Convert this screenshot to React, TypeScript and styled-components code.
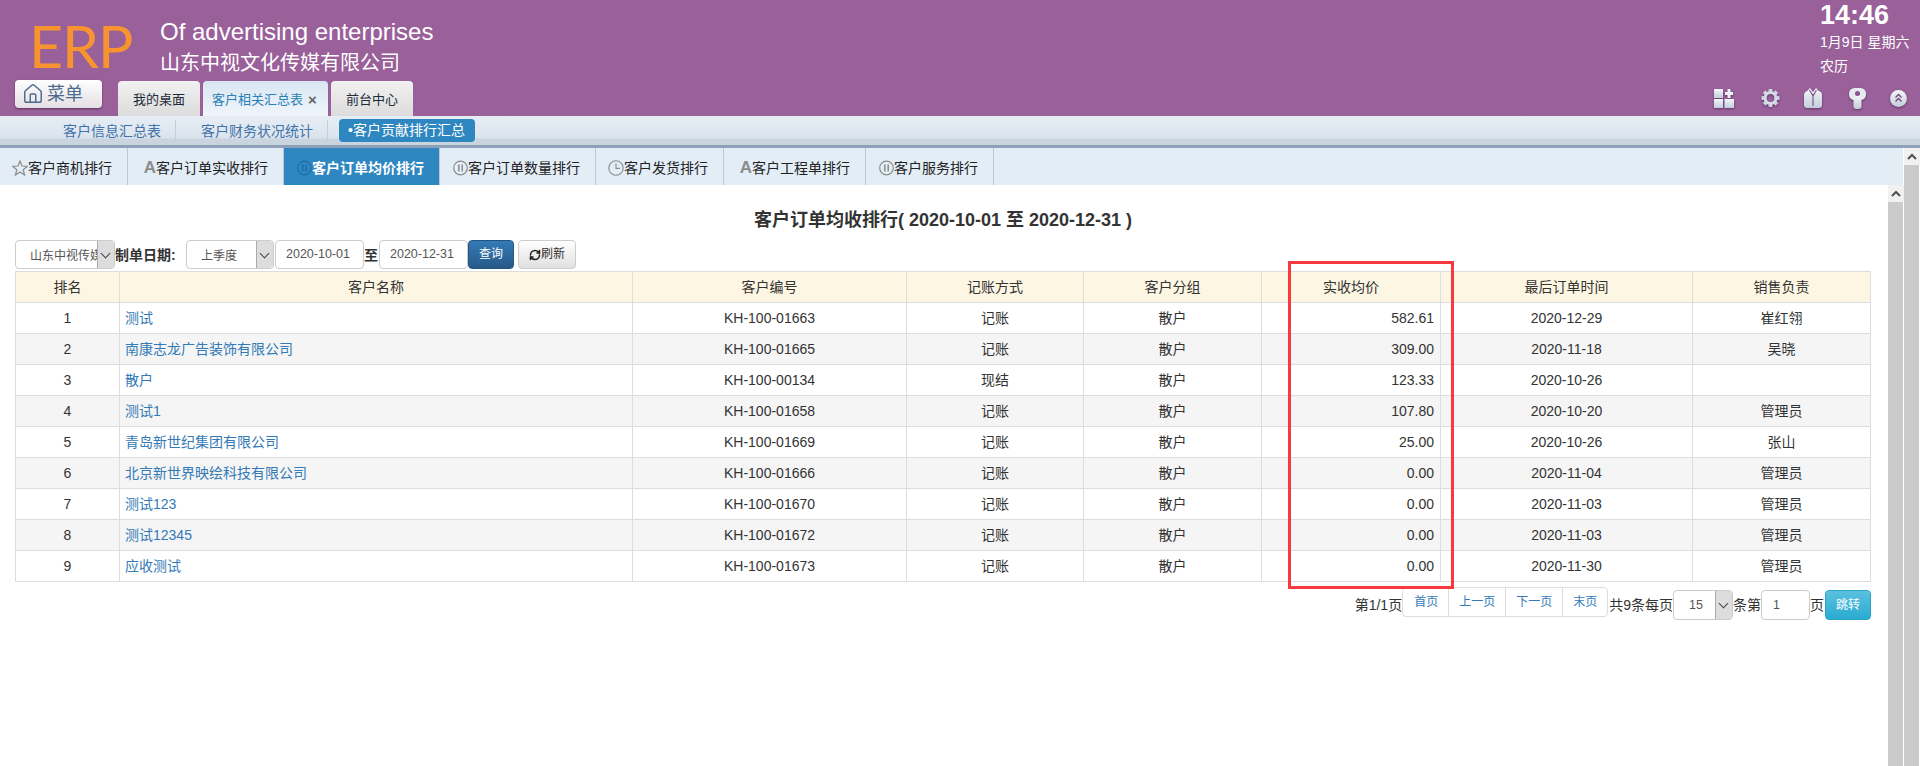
import React from "react";
import styled, { createGlobalStyle } from "styled-components";
import { House, RefreshCw } from "lucide-react";

const FONT = `"Liberation Sans", "Noto Sans CJK SC", sans-serif`;

const GlobalStyle = createGlobalStyle`
  html, body {
    margin: 0;
    padding: 0;
    background: #fff;
  }
  body {
    font-family: ${FONT};
    font-size: 14px;
    color: #333;
  }
  * {
    box-sizing: border-box;
  }
`;

const rows = [
  ["1", "测试", "KH-100-01663", "记账", "散户", "582.61", "2020-12-29", "崔红翎"],
  ["2", "南康志龙广告装饰有限公司", "KH-100-01665", "记账", "散户", "309.00", "2020-11-18", "吴晓"],
  ["3", "散户", "KH-100-00134", "现结", "散户", "123.33", "2020-10-26", ""],
  ["4", "测试1", "KH-100-01658", "记账", "散户", "107.80", "2020-10-20", "管理员"],
  ["5", "青岛新世纪集团有限公司", "KH-100-01669", "记账", "散户", "25.00", "2020-10-26", "张山"],
  ["6", "北京新世界映绘科技有限公司", "KH-100-01666", "记账", "散户", "0.00", "2020-11-04", "管理员"],
  ["7", "测试123", "KH-100-01670", "记账", "散户", "0.00", "2020-11-03", "管理员"],
  ["8", "测试12345", "KH-100-01672", "记账", "散户", "0.00", "2020-11-03", "管理员"],
  ["9", "应收测试", "KH-100-01673", "记账", "散户", "0.00", "2020-11-30", "管理员"],
];

const columns = [
  { title: "排名", width: 104 },
  { title: "客户名称", width: 513 },
  { title: "客户编号", width: 274 },
  { title: "记账方式", width: 177 },
  { title: "客户分组", width: 178 },
  { title: "实收均价", width: 179 },
  { title: "最后订单时间", width: 252 },
  { title: "销售负责", width: 178 },
];

type TabKind = "star" | "letter" | "pause" | "clock";

const rankTabs: { label: string; kind: TabKind; active?: boolean }[] = [
  { label: "客户商机排行", kind: "star" },
  { label: "客户订单实收排行", kind: "letter" },
  { label: "客户订单均价排行", kind: "pause", active: true },
  { label: "客户订单数量排行", kind: "pause" },
  { label: "客户发货排行", kind: "clock" },
  { label: "客户工程单排行", kind: "letter" },
  { label: "客户服务排行", kind: "pause" },
];

const App = () => {
  return (
    <Frame>
      <GlobalStyle />
      <Header>
        <TopRow>
          <Brand>
            <Logo>ERP</Logo>
            <BrandText>
              <Slogan>Of advertising enterprises</Slogan>
              <Company>山东中视文化传媒有限公司</Company>
            </BrandText>
          </Brand>
          <Clock>
            <Time>14:46</Time>
            <ClockLine>1月9日 星期六</ClockLine>
            <ClockLine>农历</ClockLine>
          </Clock>
        </TopRow>
        <BottomRow>
          <MenuButton>
            <House size={22} strokeWidth={1.6} />
            菜单
          </MenuButton>
          <NavTabs>
            <NavTab>我的桌面</NavTab>
            <NavTab $active>
              客户相关汇总表
              <CloseMark>×</CloseMark>
            </NavTab>
            <NavTab>前台中心</NavTab>
          </NavTabs>
          <ToolIcons>
            <svg width="20" height="19" viewBox="0 0 20 19">
              <defs>
                <linearGradient id="toolFill" x1="0" y1="0" x2="0" y2="1">
                  <stop offset="0" stopColor="#f4f6fa" />
                  <stop offset="1" stopColor="#c3cddb" />
                </linearGradient>
              </defs>
              <rect x="0" y="0" width="9" height="9" fill="url(#toolFill)" />
              <rect x="0" y="10" width="9" height="9" fill="url(#toolFill)" />
              <rect x="10.5" y="10" width="9.5" height="9" fill="url(#toolFill)" />
              <rect x="13.5" y="0" width="3" height="9" fill="#eef1f6" />
              <rect x="11" y="3" width="8" height="3" fill="#eef1f6" />
            </svg>
            <ToolSlot $gap={27}>
              <svg width="19" height="18" viewBox="0 0 19 19">
                {[0, 45, 90, 135, 180, 225, 270, 315].map((deg) => (
                  <rect
                    key={deg}
                    x="7.5"
                    y="0"
                    width="4"
                    height="5"
                    fill="#ccd4df"
                    transform={`rotate(${deg} 9.5 9.5)`}
                  />
                ))}
                <circle cx="9.5" cy="9.5" r="5.7" fill="none" stroke="#d4dbe5" strokeWidth="3.2" />
              </svg>
            </ToolSlot>
            <ToolSlot $gap={24}>
              <svg width="18" height="20" viewBox="0 0 18 20">
                <path
                  d="M3 3 L6 0 L9 4 L12 0 L15 3 Q18 4 18 7 V17 Q18 20 15 20 H3 Q0 20 0 17 V7 Q0 4 3 3 Z"
                  fill="url(#toolFill)"
                />
                <path d="M5.5 2 L9 8 L12.5 2 M9 6 V18" fill="none" stroke="#7b4d82" strokeWidth="1.1" />
              </svg>
            </ToolSlot>
            <ToolSlot $gap={27}>
              <svg width="17" height="21" viewBox="0 0 17 21">
                <rect x="0" y="0" width="17" height="12" rx="5.5" fill="#e6eaf1" />
                <rect x="4.5" y="8" width="8" height="13" rx="3" fill="url(#toolFill)" />
                <circle cx="8.5" cy="5.5" r="2.5" fill="#8a5590" />
              </svg>
            </ToolSlot>
            <ToolSlot $gap={24}>
              <svg width="17" height="17" viewBox="0 0 17 17">
                <circle cx="8.5" cy="8.5" r="8.5" fill="url(#toolFill)" />
                <path d="M5.5 7.5 L8.5 4.5 L11.5 7.5 M5.5 11.5 L8.5 8.5 L11.5 11.5" fill="none" stroke="#6d4378" strokeWidth="1.3" />
              </svg>
            </ToolSlot>
          </ToolIcons>
        </BottomRow>
      </Header>

      <SubNav>
        <SubNavItem $first>客户信息汇总表</SubNavItem>
        <SubNavItem>客户财务状况统计</SubNavItem>
        <SubNavPill>•客户贡献排行汇总</SubNavPill>
      </SubNav>

      <Main>
        <Workspace>
          <TabBar>
            {rankTabs.map((tab) => (
              <RankTab key={tab.label} $active={tab.active}>
                <TabIconSlot>
                  <TabIcon kind={tab.kind} active={tab.active} />
                </TabIconSlot>
                {tab.label}
              </RankTab>
            ))}
          </TabBar>
          <WorkBody>
            <Page>
              <Title>客户订单均收排行( 2020-10-01 至 2020-12-31 )</Title>
              <Toolbar>
                <SelectBox $width={100}>
                  <SelectText>山东中视传媒</SelectText>
                  <SelectArrow />
                </SelectBox>
                <FieldLabel>制单日期:</FieldLabel>
                <SelectBox $width={88}>
                  <SelectText>上季度</SelectText>
                  <SelectArrow />
                </SelectBox>
                <DateBox>2020-10-01</DateBox>
                <RangeLabel>至</RangeLabel>
                <DateBox>2020-12-31</DateBox>
                <PrimaryButton>查询</PrimaryButton>
                <RefreshButton>
                  <RefreshCw size={12} strokeWidth={3.2} color="#222" />
                  刷新
                </RefreshButton>
              </Toolbar>

              <ReportTable>
                <thead>
                  <tr>
                    {columns.map((col) => (
                      <HeadCell key={col.title} $width={col.width}>
                        {col.title}
                      </HeadCell>
                    ))}
                  </tr>
                </thead>
                <tbody>
                  {rows.map((row) => (
                    <tr key={row[0]}>
                      {row.map((value, i) =>
                        i === 1 ? (
                          <NameCell key={i}>{value}</NameCell>
                        ) : i === 5 ? (
                          <AmountCell key={i}>{value}</AmountCell>
                        ) : (
                          <Cell key={i}>{value}</Cell>
                        )
                      )}
                    </tr>
                  ))}
                </tbody>
              </ReportTable>

              <Pager>
                <PagerText>第1/1页</PagerText>
                <PagerLinks>
                  <PagerLink>首页</PagerLink>
                  <PagerLink>上一页</PagerLink>
                  <PagerLink>下一页</PagerLink>
                  <PagerLink>末页</PagerLink>
                </PagerLinks>
                <PagerText>共9条每页</PagerText>
                <PageSizeBox>
                  <PageSizeText>15</PageSizeText>
                  <SelectArrow />
                </PageSizeBox>
                <PagerText>条第</PagerText>
                <PageInput>1</PageInput>
                <PagerText>页</PagerText>
                <JumpButton>跳转</JumpButton>
              </Pager>

              <Highlight />
            </Page>
            <ScrollTrack>
              <ScrollUp>
                <UpChevron />
              </ScrollUp>
              <ScrollThumb />
            </ScrollTrack>
          </WorkBody>
        </Workspace>
        <OuterScroll>
          <ScrollUp>
            <UpChevron />
          </ScrollUp>
          <ScrollThumb />
        </OuterScroll>
      </Main>
    </Frame>
  );
};

export default App;

const TabIcon = ({ kind, active }: { kind: TabKind; active?: boolean }) => {
  const tone = active ? "#1d6cab" : "#8b8b8b";
  if (kind === "letter") return <LetterIcon>A</LetterIcon>;
  if (kind === "star") {
    return (
      <svg width="16" height="16" viewBox="0 0 16 16">
        <path
          d="M8 1 L10 6 L15.4 6.3 L11.2 9.7 L12.6 15 L8 12 L3.4 15 L4.8 9.7 L.6 6.3 L6 6 Z"
          fill="none"
          stroke={tone}
          strokeWidth="1.2"
        />
      </svg>
    );
  }
  if (kind === "clock") {
    return (
      <svg width="16" height="16" viewBox="0 0 16 16">
        <circle cx="8" cy="8" r="7.2" fill="none" stroke={tone} strokeWidth="1.1" />
        <path d="M8 3.5 V8.4 H12" fill="none" stroke={tone} strokeWidth="1.1" />
      </svg>
    );
  }
  return (
    <svg width="15" height="16" viewBox="0 0 15 16">
      <circle cx="7.5" cy="8" r="6.8" fill="none" stroke={tone} strokeWidth="1.2" />
      <path d="M5.8 4.5 V11.5 M9.2 4.5 V11.5" fill="none" stroke={tone} strokeWidth="1.5" />
    </svg>
  );
};

const UpChevron = () => (
  <svg width="10" height="7" viewBox="0 0 10 7">
    <path d="M1 6 L5 2 L9 6" fill="none" stroke="#505050" strokeWidth="2" />
  </svg>
);

const Frame = styled.div`
  display: flex;
  flex-direction: column;
  width: 1920px;
  height: 766px;
  overflow: hidden;
`;

const Header = styled.header`
  display: flex;
  flex-direction: column;
  height: 116px;
  background: #99609a;
  flex: none;
`;

const TopRow = styled.div`
  display: flex;
  justify-content: space-between;
  height: 80px;
`;

const Brand = styled.div`
  display: flex;
  padding-left: 29px;
`;

const Logo = styled.div`
  width: 131px;
  font-family: "Lato", sans-serif;
  font-weight: 400;
  font-size: 59px;
  letter-spacing: -1px;
  line-height: 92px;
  color: #f79430;
`;

const BrandText = styled.div`
  display: flex;
  flex-direction: column;
  gap: 1px;
  padding-top: 17px;
  color: #fff;
`;

const Slogan = styled.div`
  font-size: 24px;
  line-height: 30px;
`;

const Company = styled.div`
  font-size: 20px;
  line-height: 30px;
`;

const Clock = styled.div`
  width: 100px;
  color: #fff;
`;

const Time = styled.div`
  font-size: 27px;
  font-weight: 700;
  line-height: 30px;
`;

const ClockLine = styled.div`
  font-size: 14px;
  line-height: 24px;
`;

const BottomRow = styled.div`
  display: flex;
  height: 36px;
  padding-left: 15px;
`;

const MenuButton = styled.div`
  display: flex;
  align-items: center;
  gap: 3px;
  width: 87px;
  height: 28px;
  padding-left: 7px;
  border-radius: 4px;
  background: linear-gradient(#fff, #e4dfe3);
  box-shadow: 0 1px 2px rgba(50, 20, 50, 0.6);
  color: #4b6c8e;
  font-size: 18px;
  line-height: 28px;
`;

const NavTabs = styled.div`
  display: flex;
  gap: 3px;
  margin: 1px 0 0 16px;
`;

const NavTab = styled.div<{ $active?: boolean }>`
  display: flex;
  align-items: center;
  gap: 5px;
  width: ${(p) => (p.$active ? 125 : 82)}px;
  height: 35px;
  padding: ${(p) => (p.$active ? "2px 0 0 9px" : "2px 0 0 15px")};
  border-radius: 4px 4px 0 0;
  background: ${(p) => (p.$active ? "linear-gradient(#d9e6f2, #eff5fb)" : "linear-gradient(#f1f1f1, #dcdcdc)")};
  color: ${(p) => (p.$active ? "#2a7fb5" : "#1e2c3a")};
  font-size: 13px;
  line-height: 20px;
`;

const CloseMark = styled.span`
  color: #666;
  font-size: 15px;
  font-weight: 700;
`;

const ToolIcons = styled.div`
  display: flex;
  align-items: center;
  height: 36px;
  margin-left: auto;
  margin-right: 13px;

  svg {
    display: block;
    filter: drop-shadow(0 1px 1px rgba(50, 20, 60, 0.55));
  }
`;

const ToolSlot = styled.div<{ $gap: number }>`
  margin-left: ${(p) => p.$gap}px;
`;

const SubNav = styled.nav`
  display: flex;
  align-items: center;
  height: 32px;
  padding: 0 0 3px 63px;
  flex: none;
  background: linear-gradient(#e6edf5 0, #dbe3ec 22px, #c9d4df 23px, #c9d4df 29px, #8fa1b6 29px, #8fa1b6 32px);
`;

const SubNavItem = styled.div<{ $first?: boolean }>`
  height: 22px;
  padding: 0 14px 0 ${(p) => (p.$first ? 0 : 25)}px;
  border-right: 1px solid #c3cfdb;
  color: #3f72a8;
  font-size: 14px;
  line-height: 22px;
`;

const SubNavPill = styled.div`
  height: 23px;
  width: 136px;
  margin-left: 11px;
  padding-left: 9px;
  border-radius: 4px;
  background: #2f87c1;
  color: #fff;
  font-size: 14px;
  line-height: 23px;
  white-space: nowrap;
`;

const Main = styled.div`
  display: flex;
  flex: 1;
  min-height: 0;
`;

const Workspace = styled.div`
  display: flex;
  flex-direction: column;
  width: 1903px;
`;

const TabBar = styled.div`
  display: flex;
  height: 37px;
  flex: none;
  background: #e3edf6;
`;

const RankTab = styled.div<{ $active?: boolean }>`
  display: flex;
  align-items: center;
  padding: 2px 15px 0 0;
  border-right: 1px solid #bcc8d3;
  background: ${(p) => (p.$active ? "#2e87c0" : "transparent")};
  color: ${(p) => (p.$active ? "#fff" : "#222")};
  font-size: 14px;
  font-weight: ${(p) => (p.$active ? 700 : 400)};
  line-height: 20px;
  white-space: nowrap;
`;

const TabIconSlot = styled.span`
  display: flex;
  align-items: center;
  justify-content: flex-end;
  width: 28px;
  flex: none;

  svg {
    display: block;
  }
`;

const LetterIcon = styled.span`
  color: #8c8c8c;
  font-size: 17px;
  font-weight: 700;
  line-height: 20px;
`;

const WorkBody = styled.div`
  display: flex;
  flex: 1;
  min-height: 0;
`;

const Page = styled.main`
  position: relative;
  flex: 1;
  padding: 22px 17px 0 15px;
  background: #fff;
`;

const Title = styled.h1`
  margin: 0 0 7px;
  color: #333;
  font-size: 18px;
  font-weight: 700;
  line-height: 26px;
  text-align: center;
`;

const Toolbar = styled.div`
  display: flex;
  align-items: center;
  height: 29px;
  margin-bottom: 2px;
`;

const SelectBox = styled.div<{ $width: number }>`
  display: flex;
  justify-content: space-between;
  width: ${(p) => p.$width}px;
  height: 29px;
  flex: none;
  overflow: hidden;
  border: 1px solid #ccc;
  border-radius: 4px;
  background: #fff;
`;

const SelectText = styled.span`
  flex: 1;
  min-width: 0;
  padding: 1px 0 0 14px;
  overflow: hidden;
  color: #555;
  font-size: 12px;
  line-height: 29px;
  white-space: nowrap;
`;

const SelectArrow = styled.span`
  position: relative;
  width: 17px;
  flex: none;
  border-left: 1px solid #aaa;
  background: #ddd;

  &::after {
    content: "";
    position: absolute;
    left: 4px;
    top: 9px;
    width: 6px;
    height: 6px;
    border-right: 1px solid #444;
    border-bottom: 1px solid #444;
    transform: rotate(45deg);
  }
`;

const FieldLabel = styled.label`
  width: 71px;
  color: #333;
  font-size: 14px;
  font-weight: 700;
  line-height: 20px;
  white-space: nowrap;
  flex: none;
`;

const RangeLabel = styled.span`
  width: 15px;
  color: #333;
  font-size: 14px;
  font-weight: 700;
  line-height: 20px;
  flex: none;
`;

const DateBox = styled.div`
  width: 89px;
  height: 29px;
  flex: none;
  margin-left: 1px;
  padding-left: 10px;
  border: 1px solid #ccc;
  border-radius: 4px;
  background: #fff;
  color: #555;
  font-size: 12.5px;
  line-height: 26px;

  & + span + & {
    margin-left: 0;
  }
`;

const PrimaryButton = styled.div`
  width: 46px;
  height: 29px;
  flex: none;
  border: 1px solid #245580;
  border-radius: 4px;
  background: linear-gradient(#337ab7, #265a88);
  color: #fff;
  font-size: 12px;
  line-height: 27px;
  text-align: center;
`;

const RefreshButton = styled.div`
  display: flex;
  align-items: center;
  width: 58px;
  height: 29px;
  margin-left: 4px;
  padding-left: 10px;
  flex: none;
  border: 1px solid #ccc;
  border-radius: 4px;
  background: linear-gradient(#fff, #e0e0e0);
  color: #333;
  font-size: 12px;
  line-height: 27px;
`;

const ReportTable = styled.table`
  width: 1855px;
  table-layout: fixed;
  border-collapse: collapse;
  color: #333;
  font-size: 14px;

  tbody tr:nth-child(even) {
    background: #f5f5f5;
  }
`;

const HeadCell = styled.th<{ $width: number }>`
  width: ${(p) => p.$width}px;
  height: 31px;
  padding: 0;
  border: 1px solid #ddd;
  background: #fdf6e3;
  font-weight: 400;
  line-height: 20px;
  text-align: center;
`;

const Cell = styled.td`
  height: 31px;
  padding: 0 5px;
  border: 1px solid #ddd;
  line-height: 20px;
  text-align: center;
`;

const NameCell = styled(Cell)`
  color: #337ab7;
  text-align: left;
`;

const AmountCell = styled(Cell)`
  padding-right: 6px;
  text-align: right;
`;

const Pager = styled.div`
  display: flex;
  align-items: center;
  justify-content: flex-end;
  height: 36px;
  margin-top: 5px;
`;

const PagerText = styled.span`
  color: #333;
  font-size: 14px;
  line-height: 20px;
  white-space: nowrap;
`;

const PagerLinks = styled.div`
  display: flex;
  align-self: flex-start;
  height: 30px;
  margin-right: 1px;
  border: 1px solid #ddd;
  border-radius: 4px;
  background: #fff;
`;

const PagerLink = styled.a`
  padding: 0 10px;
  border-left: 1px solid #ddd;
  color: #337ab7;
  font-size: 12px;
  line-height: 28px;

  &:first-child {
    border-left: 0;
    padding-left: 11px;
  }
`;

const PageSizeBox = styled(SelectBox).attrs({ $width: 60 })`
  height: 30px;
`;

const PageSizeText = styled.span`
  flex: 1;
  padding-left: 15px;
  color: #555;
  font-size: 12.5px;
  line-height: 28px;
`;

const PageInput = styled.div`
  width: 49px;
  height: 30px;
  padding-left: 11px;
  border: 1px solid #ccc;
  border-radius: 4px;
  background: #fff;
  color: #555;
  font-size: 12.5px;
  line-height: 28px;
`;

const JumpButton = styled.div`
  width: 46px;
  height: 30px;
  margin-left: 1px;
  border: 1px solid #28a4c9;
  border-radius: 4px;
  background: linear-gradient(#5bc0de, #2aabd2);
  color: #fff;
  font-size: 12px;
  line-height: 28px;
  text-align: center;
`;

const Highlight = styled.div`
  position: absolute;
  left: 1288px;
  top: 76px;
  width: 166px;
  height: 328px;
  border: 3px solid #f63a3f;
  pointer-events: none;
`;

const ScrollTrack = styled.div`
  display: flex;
  flex-direction: column;
  width: 16px;
  flex: none;
`;

const OuterScroll = styled(ScrollTrack)`
  margin-left: 1px;
`;

const ScrollUp = styled.div`
  display: flex;
  align-items: center;
  justify-content: center;
  height: 17px;
  flex: none;
  background: #f1f1f1;
`;

const ScrollThumb = styled.div`
  flex: 1;
  margin-right: 1px;
  background: #cbcbcb;
`;
